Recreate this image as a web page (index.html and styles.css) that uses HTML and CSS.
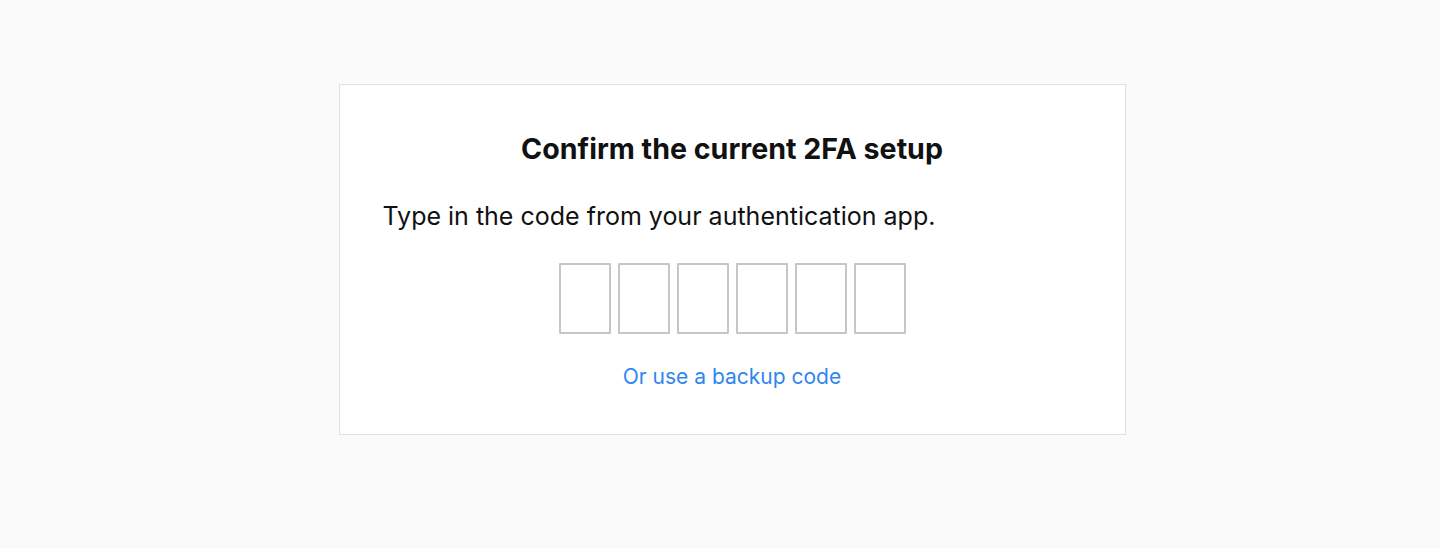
FILE: index.html
```html
<!DOCTYPE html>
<html lang="en">
<head>
<meta charset="utf-8">
<title>Confirm 2FA</title>
<link rel="stylesheet" href="styles.css">
</head>
<body>
<main class="page">
  <section class="card">
    <h1 class="title">Confirm the current 2FA setup</h1>
    <p class="hint">Type in the code from your authentication app.</p>
    <div class="code">
      <input class="digit" type="text" maxlength="1">
      <input class="digit" type="text" maxlength="1">
      <input class="digit" type="text" maxlength="1">
      <input class="digit" type="text" maxlength="1">
      <input class="digit" type="text" maxlength="1">
      <input class="digit" type="text" maxlength="1">
    </div>
    <a class="backup" href="#">Or use a backup code</a>
  </section>
</main>
</body>
</html>
```
FILE: styles.css
```css
* { box-sizing: border-box; }
html, body { margin: 0; height: 100%; }
body {
  background: #fafafa;
  font-family: Inter, "Noto Sans", sans-serif;
  color: #111;
}
.page {
  display: flex;
  justify-content: center;
  padding-top: 84px;
  padding-left: 24px;
}
.card {
  width: 787px;
  height: 351px;
  background: #fff;
  border: 1px solid #e0e0e0;
  padding: 48px 43px 0;
  display: flex;
  flex-direction: column;
}
.title {
  margin: 0;
  text-align: center;
  font-size: 28.6px;
  font-weight: 700;
  line-height: 32px;
  color: #111;
}
.hint {
  margin: 36px 0 0;
  font-size: 25px;
  line-height: 30px;
  color: #111;
}
.code {
  display: flex;
  justify-content: center;
  gap: 7px;
  margin-top: 32px;
}
.digit {
  width: 52px;
  height: 71px;
  border: 2px solid #c6c6c6;
  border-radius: 1px;
  background: #fff;
  margin: 0;
  padding: 0;
}
.backup {
  align-self: center;
  margin-top: 30px;
  font-size: 21px;
  line-height: 26px;
  color: #2f86f0;
  text-decoration: none;
}
```
